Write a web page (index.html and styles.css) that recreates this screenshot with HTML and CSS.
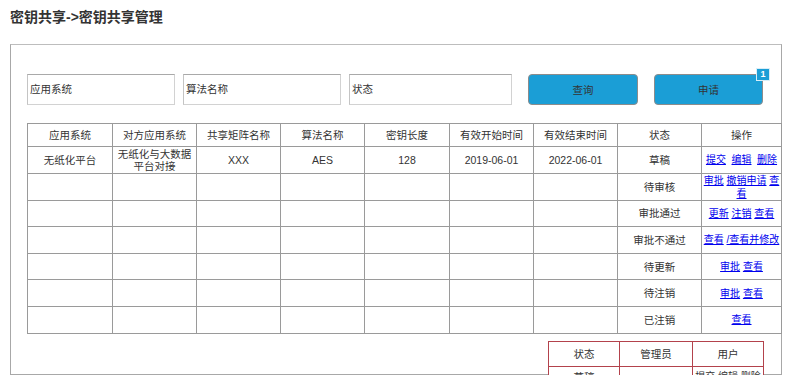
FILE: index.html
```html
<!DOCTYPE html>
<html lang="zh">
<head>
<meta charset="utf-8">
<title>密钥共享管理</title>
<link rel="stylesheet" href="styles.css">
</head>
<body>
<h1 class="page-title">密钥共享-&gt;密钥共享管理</h1>
<div class="panel">
  <div class="search-bar">
    <div class="field f1">应用系统</div>
    <div class="field f2">算法名称</div>
    <div class="field f3">状态</div>
    <button class="btn btn-query">查询</button>
    <div class="btn-wrap">
      <button class="btn btn-apply">申请</button>
      <span class="badge">1</span>
    </div>
  </div>
  <table class="grid">
    <colgroup>
      <col class="c85"><col class="c84"><col class="c84"><col class="c84"><col class="c85"><col class="c84"><col class="c84"><col class="c84"><col class="c80">
    </colgroup>
    <thead>
      <tr><th>应用系统</th><th>对方应用系统</th><th>共享矩阵名称</th><th>算法名称</th><th>密钥长度</th><th>有效开始时间</th><th>有效结束时间</th><th>状态</th><th>操作</th></tr>
    </thead>
    <tbody>
      <tr><td>无纸化平台</td><td>无纸化与大数据平台对接</td><td>XXX</td><td>AES</td><td>128</td><td>2019-06-01</td><td>2022-06-01</td><td>草稿</td><td class="ops"><a href="#">提交</a>&nbsp;&nbsp;<a href="#">编辑</a>&nbsp;&nbsp;<a href="#">删除</a></td></tr>
      <tr><td></td><td></td><td></td><td></td><td></td><td></td><td></td><td>待审核</td><td class="ops"><a href="#">审批</a> <a href="#">撤销申请</a> <a href="#">查<span class="wrap-tail">看</span></a></td></tr>
      <tr><td></td><td></td><td></td><td></td><td></td><td></td><td></td><td>审批通过</td><td class="ops"><a href="#">更新</a> <a href="#">注销</a> <a href="#">查看</a></td></tr>
      <tr><td></td><td></td><td></td><td></td><td></td><td></td><td></td><td>审批不通过</td><td class="ops"><a href="#">查看</a> <a href="#">/查看并修改</a></td></tr>
      <tr><td></td><td></td><td></td><td></td><td></td><td></td><td></td><td>待更新</td><td class="ops"><a href="#">审批</a> <a href="#">查看</a></td></tr>
      <tr><td></td><td></td><td></td><td></td><td></td><td></td><td></td><td>待注销</td><td class="ops"><a href="#">审批</a> <a href="#">查看</a></td></tr>
      <tr><td></td><td></td><td></td><td></td><td></td><td></td><td></td><td>已注销</td><td class="ops"><a href="#">查看</a></td></tr>
    </tbody>
  </table>
  <table class="legend">
    <colgroup><col class="l1"><col class="l2"><col class="l3"></colgroup>
    <tr class="lh"><th>状态</th><th>管理员</th><th>用户</th></tr>
    <tr class="lr"><td>草稿</td><td>-</td><td>提交 编辑 删除</td></tr>
  </table>
</div>
</body>
</html>
```
FILE: styles.css
```css
html, body {
  margin: 0;
  padding: 0;
  background: #fff;
}
body {
  font-family: "Liberation Sans", "Noto Sans CJK SC", sans-serif;
  color: #333;
}
.page-title {
  margin: 0;
  padding: 9px 0 0 10px;
  font-size: 14px;
  line-height: 17px;
  font-weight: bold;
  color: #333;
}
.panel {
  position: relative;
  margin: 18px 0 0 10px;
  border: 1px solid #a8a8a8;
  border-top-color: #bdbdbd;
  padding: 29px 0 0 16px;
  box-sizing: content-box;
  width: 754px;
  height: 300px;
}
.search-bar {
  display: flex;
  align-items: stretch;
  height: 31px;
}
.field {
  box-sizing: border-box;
  height: 31px;
  border: 1px solid #d2d2d2;
  border-top-color: #a9a9a9;
  border-left-color: #c4c4c4;
  padding: 0 2px;
  font-size: 10.5px;
  line-height: 29px;
  color: #333;
  margin-right: 8px;
}
.f1 { width: 148px; }
.f2 { width: 158px; }
.f3 { width: 163px; margin-right: 16px; }
.btn {
  box-sizing: border-box;
  height: 31px;
  border: 1px solid #8c8c8c;
  border-radius: 4px;
  background: #1b9ed6;
  color: #333;
  font-family: inherit;
  font-size: 10.5px;
  padding: 0;
  margin: 0;
}
.btn-query { width: 110px; margin-right: 16px; }
.btn-wrap {
  position: relative;
  width: 109px;
}
.btn-apply { width: 109px; }
.badge {
  position: absolute;
  top: -6px;
  right: -7px;
  box-sizing: border-box;
  width: 14px;
  height: 13px;
  background: #1b9ed6;
  border: 1px solid #d8eef8;
  color: #fff;
  font-size: 9px;
  font-weight: bold;
  line-height: 11px;
  text-align: center;
}
.grid {
  margin-top: 18px;
  border-collapse: collapse;
  table-layout: fixed;
  width: 754px;
  font-size: 10.5px;
}
.c85 { width: 85px; }
.c84 { width: 84px; }
.c80 { width: 80px; }
.grid th, .grid td {
  border: 1px solid #9a9a9a;
  padding: 0 2px;
  text-align: center;
  vertical-align: middle;
  font-weight: normal;
  color: #333;
  line-height: 12px;
}
.grid thead tr { height: 23px; }
.grid tbody tr { height: 26.6px; }
.grid td.ops { padding: 0; font-size: 10px; line-height: 13px; }
.grid a { color: #0000ee; text-decoration: underline; }
.legend {
  position: absolute;
  left: 537px;
  top: 296px;
  border-collapse: collapse;
  table-layout: fixed;
  width: 215px;
  background: #fff;
  font-size: 10.5px;
}
.l1 { width: 71px; }
.l2 { width: 73px; }
.l3 { width: 71px; }
.legend th, .legend td {
  border: 1px solid #b3424c;
  text-align: center;
  vertical-align: top;
  font-weight: normal;
  color: #333;
  padding: 0;
  white-space: nowrap;
}
.legend .lh th { height: 24px; line-height: 24px; }
.legend .lr td { height: 20px; line-height: 20px; }
.legend .lr td:last-child { font-size: 10px; }
```
